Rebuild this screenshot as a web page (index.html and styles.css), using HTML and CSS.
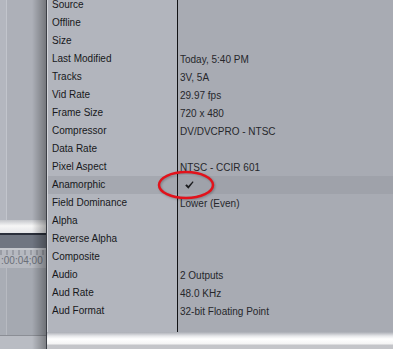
FILE: index.html
```html
<!DOCTYPE html>
<html lang="en">
<head>
    <meta charset="UTF-8">
    <meta name="viewport" content="width=device-width, initial-scale=1.0">
    <title>Item Properties</title>
    <link rel="stylesheet" href="styles.css">
</head>
<body>
    <div class="screen">
        <!-- Timeline window behind the panel -->
        <div class="side">
            <div class="side-top"></div>
            <div class="side-edge"></div>
            <div class="side-line"></div>
            <div class="side-bar"></div>
            <div class="side-sep"></div>
            <div class="side-ruler">
                <div class="ticks"></div>
                <span class="timecode">:00:04;00</span>
            </div>
            <div class="side-tracks"></div>
            <div class="side-foot"></div>
        </div>

        <!-- Properties panel -->
        <div class="panel">
            <div class="table">
                <div class="row"><div class="label">Source</div><div class="value"></div></div>
                <div class="row"><div class="label">Offline</div><div class="value"></div></div>
                <div class="row"><div class="label">Size</div><div class="value"></div></div>
                <div class="row"><div class="label">Last Modified</div><div class="value">Today, 5:40 PM</div></div>
                <div class="row"><div class="label">Tracks</div><div class="value">3V, 5A</div></div>
                <div class="row"><div class="label">Vid Rate</div><div class="value">29.97 fps</div></div>
                <div class="row"><div class="label">Frame Size</div><div class="value">720 x 480</div></div>
                <div class="row"><div class="label">Compressor</div><div class="value">DV/DVCPRO - NTSC</div></div>
                <div class="row"><div class="label">Data Rate</div><div class="value"></div></div>
                <div class="row"><div class="label">Pixel Aspect</div><div class="value">NTSC - CCIR 601</div></div>
                <div class="row selected">
                    <div class="label">Anamorphic</div>
                    <div class="value">
                        <svg class="check" width="9" height="8" viewBox="0 0 9 8"><path d="M0.2 4.4 L1.8 3.2 L3.3 4.9 L7.7 0.2 L8.6 0.9 L3.4 7.7 Z" fill="#1b1c1f"/></svg>
                    </div>
                </div>
                <div class="row"><div class="label">Field Dominance</div><div class="value">Lower (Even)</div></div>
                <div class="row"><div class="label">Alpha</div><div class="value"></div></div>
                <div class="row"><div class="label">Reverse Alpha</div><div class="value"></div></div>
                <div class="row"><div class="label">Composite</div><div class="value"></div></div>
                <div class="row"><div class="label">Audio</div><div class="value">2 Outputs</div></div>
                <div class="row"><div class="label">Aud Rate</div><div class="value">48.0 KHz</div></div>
                <div class="row"><div class="label">Aud Format</div><div class="value">32-bit Floating Point</div></div>
                <div class="row filler"><div class="label"></div><div class="value"></div></div>
            </div>
            <div class="panel-foot"></div>
        </div>

        <!-- Red annotation circle -->
        <svg class="callout" width="64" height="34" viewBox="0 0 64 34">
            <ellipse cx="31" cy="16" rx="27" ry="13" fill="none" stroke="#e2121b" stroke-width="2.5"/>
        </svg>
    </div>
</body>
</html>
```

FILE: styles.css
```css
body {
    margin: 0;
    font-family: "Liberation Sans", Arial, sans-serif;
    background: #aeb1b9;
}
.screen {
    position: relative;
    display: flex;
    width: 393px;
    height: 349px;
    overflow: hidden;
}

/* left strip: timeline window */
.side {
    position: relative;
    width: 46px;
    display: flex;
    flex-direction: column;
    flex-shrink: 0;
}
.side::after {
    content: "";
    position: absolute;
    top: 0;
    right: 0;
    width: 14px;
    height: 100%;
    background: linear-gradient(to right, rgba(0, 0, 0, 0), rgba(0, 0, 0, 0.32));
}
.side-top {
    height: 220px;
    background: linear-gradient(to right, #b4b7bf 0, #b4b7bf 6px, #c2c5cc 6px, #c2c5cc 7px, #adb0b8 7px);
}
.side-edge {
    height: 13px;
    background: linear-gradient(#c4c6cb, #f6f6f6 45%, #e4e5e8);
}
.side-line {
    height: 2px;
    background: #2a2f3b;
}
.side-bar {
    height: 13px;
    background: #6f7581;
}
.side-sep {
    height: 2px;
    background: #c4c7cd;
}
.side-ruler {
    height: 18px;
    background: #b6b9c0;
    overflow: hidden;
}
.ticks {
    height: 5px;
    background: repeating-linear-gradient(to right, #9a9da5 0, #9a9da5 2px, transparent 2px, transparent 6px);
}
.timecode {
    display: block;
    padding-left: 1px;
    white-space: nowrap;
    font-size: 10px;
    line-height: 11px;
    color: #6b6f78;
}
.side-tracks {
    height: 67px;
    background: linear-gradient(to right, #a9adb5 0, #a9adb5 6px, #b7bac1 6px, #b7bac1 7px, #a5a9b1 7px);
    border-bottom: 1px solid #8b8e95;
}
.side-foot {
    flex: 1;
    background: #b9bcc3;
}

/* properties panel */
.panel {
    flex: 1;
    display: flex;
    flex-direction: column;
    border-left: 1px solid #3c3f46;
}
.table {
    margin-top: -4px;
    display: flex;
    flex-direction: column;
    height: 336px;
}
.row {
    display: flex;
    height: 18px;
    font-size: 10px;
    line-height: 18px;
    white-space: nowrap;
}
.row.filler {
    flex: 1;
}
.label {
    width: 125px;
    padding-left: 5px;
    color: #17181b;
    background: #b2b5bd;
    box-shadow: inset 1px 0 #d3d5da;
}
.value {
    flex: 1;
    padding-left: 2px;
    padding-top: 1px;
    line-height: 17px;
    color: #26272b;
    background: #a8abb3;
    border-left: 1px solid #121316;
}
.row.selected .label {
    background: #a5a8b0;
}
.row.selected .value {
    background: #9fa2aa;
}
.check {
    display: block;
    margin: 4px 0 0 5px;
}
.panel-foot {
    flex: 1;
    background: linear-gradient(#a9acb4 0, #e6e7ea 4px, #ffffff 7px, #f4f4f4 12px, #c4c5c9 13px, #c4c5c9 100%);
}

/* red annotation */
.callout {
    position: absolute;
    left: 155px;
    top: 169px;
    filter: drop-shadow(1px 1px 1px rgba(0, 0, 0, 0.25));
}
```
